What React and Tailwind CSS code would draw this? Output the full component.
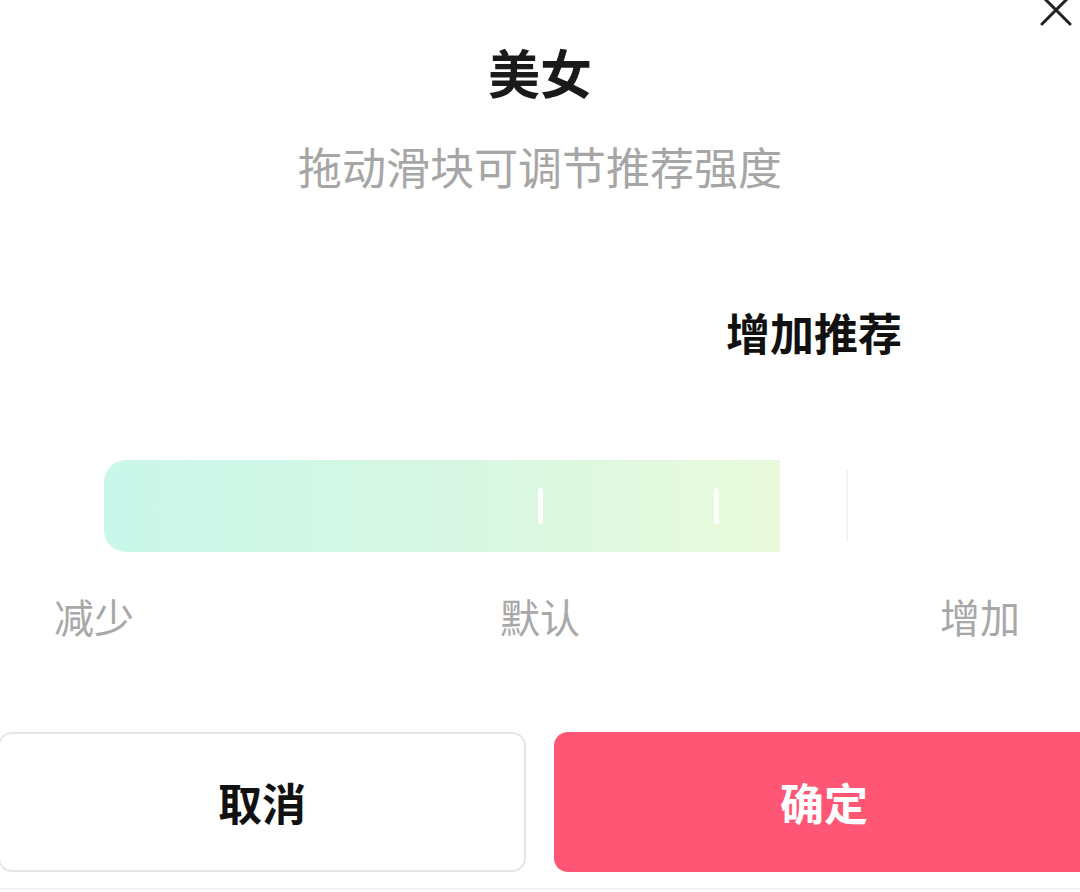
import React from 'react';

const ticks = [
  { left: 'left-[434px]' },
  { left: 'left-[610px]' },
];

export default function App() {
  return (
    <div className="relative w-[1080px] h-[892px] overflow-hidden bg-white font-['Noto_Sans_CJK_SC',sans-serif]">
      {/* close button */}
      <svg className="absolute right-[6px] top-[-8px] w-[36px] h-[36px]" viewBox="0 0 36 36" fill="none" stroke="#222" strokeWidth="3" strokeLinecap="round">
        <path d="M4 4 L32 32 M32 4 L4 32" />
      </svg>

      <div className="flex flex-col items-center pt-[38px]">
        <h1 className="text-[52px] leading-[68px] font-bold text-[#1a1a1a]">美女</h1>
        <p className="mt-[30px] text-[44px] leading-[60px] text-[#a6a6a6]">拖动滑块可调节推荐强度</p>
      </div>

      <div className="flex justify-end pr-[178px] mt-[106px]">
        <span className="text-[44px] leading-[60px] font-bold text-[#111]">增加推荐</span>
      </div>

      {/* slider */}
      <div className="flex items-center mt-[98px] pl-[104px]">
        <div className="relative w-[676px] h-[92px] rounded-l-[22px] bg-gradient-to-r from-[#c9f7ea] via-[#d6f7e3] to-[#e9fadc]">
          {ticks.map((t, i) => (
            <div key={i} className={`absolute top-[28px] w-[5px] h-[36px] rounded-full bg-white/90 ${t.left}`} />
          ))}
        </div>
        <div className="ml-[66px] w-[2px] h-[72px] bg-[#f4f4f4]" />
      </div>

      <div className="flex justify-between pl-[54px] pr-[60px] mt-[38px]">
        <span className="text-[40px] leading-[52px] text-[#a8a8a8]">减少</span>
        <span className="text-[40px] leading-[52px] text-[#a8a8a8] translate-x-[3px]">默认</span>
        <span className="text-[40px] leading-[52px] text-[#a8a8a8]">增加</span>
      </div>

      {/* buttons */}
      <div className="flex gap-[28px] mt-[90px] ml-[-2px]">
        <button className="shrink-0 w-[528px] h-[140px] rounded-[14px] border-2 border-[#e6e6e6] bg-white text-[44px] font-bold text-[#111]">取消</button>
        <button className="shrink-0 w-[540px] h-[140px] rounded-[14px] bg-[#fe5674] text-[44px] font-bold text-white">确定</button>
      </div>
      <div className="absolute left-0 right-0 bottom-[2px] h-[2px] bg-[#f3f3f3]" />
    </div>
  );
}
